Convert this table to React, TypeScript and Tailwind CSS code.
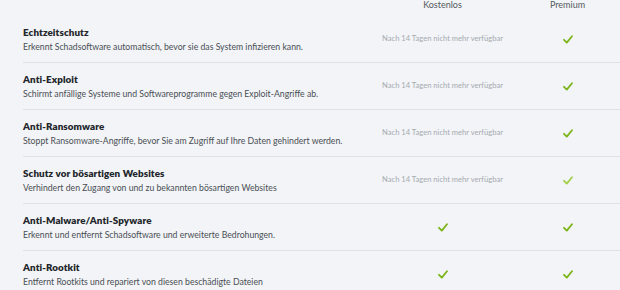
const rows = [
  {
    title: "Echtzeitschutz",
    desc: "Erkennt Schadsoftware automatisch, bevor sie das System infizieren kann.",
    free: false,
  },
  {
    title: "Anti-Exploit",
    desc: "Schirmt anfällige Systeme und Softwareprogramme gegen Exploit-Angriffe ab.",
    free: false,
  },
  {
    title: "Anti-Ransomware",
    desc: "Stoppt Ransomware-Angriffe, bevor Sie am Zugriff auf Ihre Daten gehindert werden.",
    free: false,
  },
  {
    title: "Schutz vor bösartigen Websites",
    desc: "Verhindert den Zugang von und zu bekannten bösartigen Websites",
    free: false,
    light: true,
  },
  {
    title: "Anti-Malware/Anti-Spyware",
    desc: "Erkennt und entfernt Schadsoftware und erweiterte Bedrohungen.",
    free: true,
  },
  {
    title: "Anti-Rootkit",
    desc: "Entfernt Rootkits und repariert von diesen beschädigte Dateien",
    free: true,
  },
];

function Check({ light }: { light?: boolean }) {
  return (
    <svg width="10" height="9" viewBox="0 0 10 9" className="block">
      <path
        d="M1 4.8 L3.8 7.6 L9 1.2"
        fill="none"
        stroke={light ? "#a3cf4a" : "#7cb518"}
        strokeWidth="1.8"
        strokeLinecap="round"
        strokeLinejoin="round"
      />
    </svg>
  );
}

export default function App() {
  return (
    <div
      className="w-[620px] h-[290px] overflow-hidden bg-[#f2f4f7]"
      style={{ fontFamily: "Lato, 'Noto Sans', sans-serif" }}
    >
      <div className="w-[630px] pl-[23px]">
        <div className="grid grid-cols-[357px_125px_125px] h-[16px] text-[9px] leading-[10px] text-[#555a60]">
          <div />
          <div className="text-center">Kostenlos</div>
          <div className="text-center">Premium</div>
        </div>
        {rows.map((r) => (
          <div
            key={r.title}
            className="grid grid-cols-[357px_125px_125px] h-[47px] border-b-[1.5px] border-[#dde1e8] items-center"
          >
            <div className="pt-[1px]">
              <div className="text-[9.8px] leading-[14px] font-extrabold text-[#22262b] tracking-[0.1px]">
                {r.title}
              </div>
              <div className="text-[8.7px] leading-[15px] text-[#4a4f55]">
                {r.desc}
              </div>
            </div>
            <div className="flex justify-center">
              {r.free ? (
                <Check />
              ) : (
                <span className="text-[7.6px] text-[#a6aab0]">
                  Nach 14 Tagen nicht mehr verfügbar
                </span>
              )}
            </div>
            <div className="flex justify-center">
              <Check light={r.light} />
            </div>
          </div>
        ))}
      </div>
    </div>
  );
}
